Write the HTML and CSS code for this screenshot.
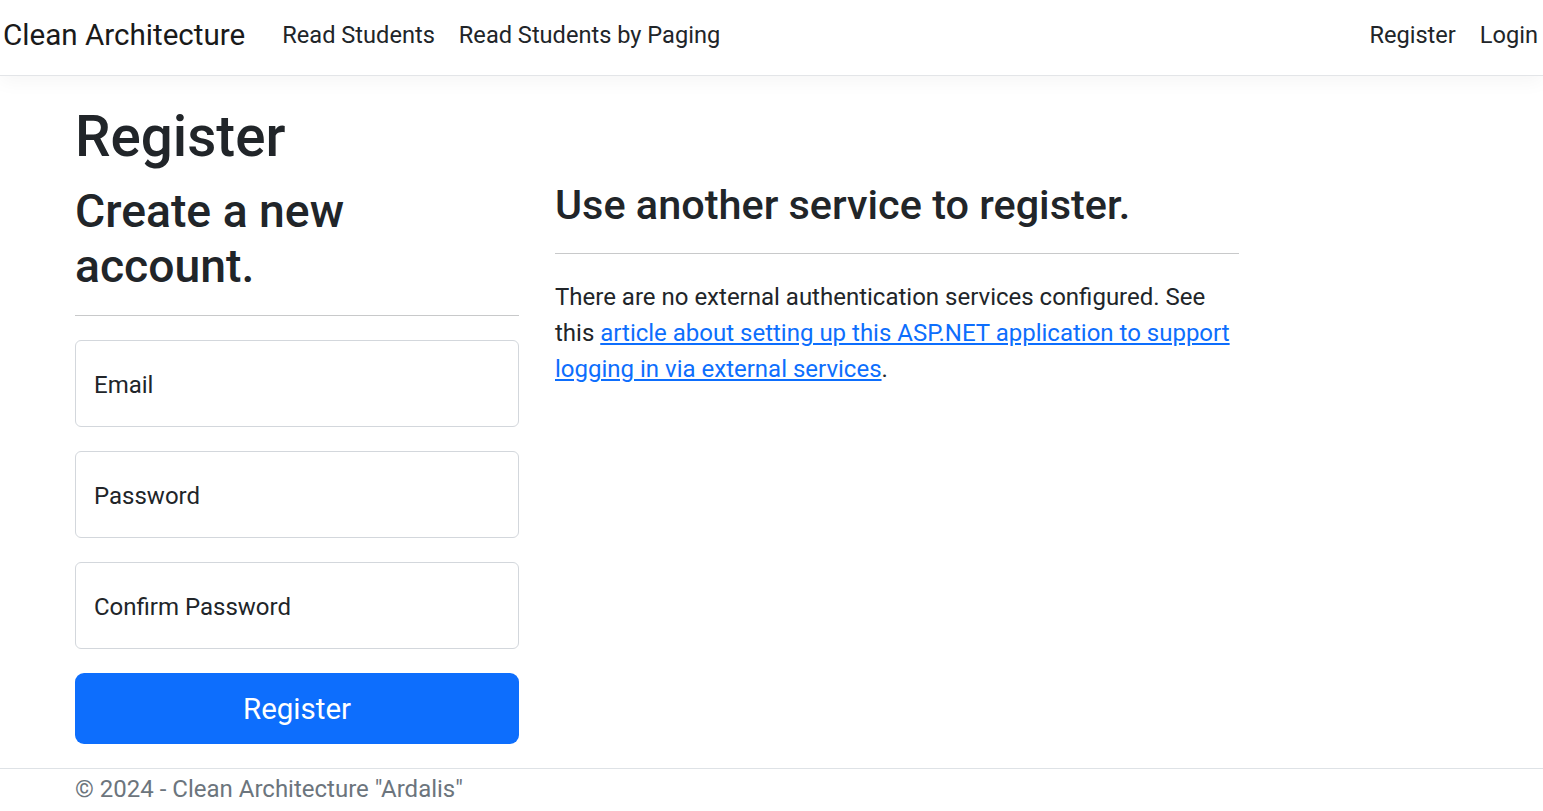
FILE: index.html
```html
<!DOCTYPE html>
<html lang="en">
<head>
<meta charset="utf-8">
<title>Register - Clean Architecture</title>
<link rel="stylesheet" href="styles.css">
</head>
<body>
<header class="navbar">
  <a class="brand" href="#">Clean Architecture</a>
  <ul class="nav nav-main">
    <li><a class="nav-link" href="#">Read Students</a></li>
    <li><a class="nav-link" href="#">Read Students by Paging</a></li>
  </ul>
  <ul class="nav nav-right">
    <li><a class="nav-link" href="#">Register</a></li>
    <li><a class="nav-link" href="#">Login</a></li>
  </ul>
</header>

<div class="container">
  <main class="main">
    <h1 class="page-title">Register</h1>
    <div class="row">
      <section class="col-form">
        <form class="register-form">
          <h2 class="form-title">Create a new account.</h2>
          <hr class="rule rule-left">
          <div class="field"><input class="form-control" type="email" placeholder="Email" aria-label="Email"></div>
          <div class="field"><input class="form-control" type="password" placeholder="Password" aria-label="Password"></div>
          <div class="field"><input class="form-control" type="password" placeholder="Confirm Password" aria-label="Confirm Password"></div>
          <button class="btn-primary" type="button">Register</button>
        </form>
      </section>
      <section class="col-external">
        <h3 class="ext-title">Use another service to register.</h3>
        <hr class="rule rule-right">
        <p class="ext-text">There are no external authentication services configured. See this <a class="link" href="#">article about setting up this ASP.NET application to support logging in via external services</a>.</p>
      </section>
    </div>
  </main>
</div>

<footer class="footer">
  <div class="footer-inner">&copy; 2024 - Clean Architecture "Ardalis"</div>
</footer>
</body>
</html>
```
FILE: styles.css
```css
html, body {
  margin: 0;
  padding: 0;
}
html { overflow: hidden; }
body {
  font-family: Roboto, "Liberation Sans", Arial, sans-serif;
  font-size: 24px;
  line-height: 1.5;
  color: #212529;
  background: #fff;
}

/* navbar */
.navbar {
  display: flex;
  align-items: flex-start;
  height: 75px;
  padding: 0 5px 0 3px;
  border-bottom: 1px solid #e3e5e8;
  box-shadow: 0 6px 18px rgba(0,0,0,.04);
}
.brand {
  font-size: 29.6px;
  line-height: 45px;
  padding-top: 13px;
  color: #1a1a1a;
  text-decoration: none;
  white-space: nowrap;
}
.nav {
  display: flex;
  gap: 24px;
  list-style: none;
  margin: 0;
  padding: 0;
}
.nav-main { margin-left: 37px; }
.nav-right { margin-left: auto; }
.nav-link {
  display: block;
  font-size: 23.6px;
  line-height: 36px;
  padding-top: 17px;
  color: #212529;
  text-decoration: none;
  white-space: nowrap;
}

/* layout */
.container {
  width: 1404px;
  margin-left: 75px;
}
.main {
  padding-top: 28px;
  padding-bottom: 24px;
}
.page-title {
  font-size: 56.5px;
  font-weight: 500;
  line-height: 1.2;
  margin: 0 0 12px;
}
.row {
  display: grid;
  grid-template-columns: 444px 684px;
  column-gap: 36px;
  align-items: start;
}
.form-title {
  font-size: 46.3px;
  font-weight: 500;
  line-height: 1.2;
  margin: 0;
}
.ext-title {
  font-size: 41.4px;
  font-weight: 500;
  line-height: 1.2;
  margin: -3px 0 0;
}
.rule {
  border: 0;
  border-top: 1px solid #c8c9ca;
  height: 0;
}
.rule-left { margin: 20px 0 24px; }
.rule-right { margin: 23px 0 25px; }

/* form */
.field { margin-bottom: 24px; }
.form-control {
  display: block;
  box-sizing: border-box;
  width: 100%;
  height: 87px;
  padding: 3px 18px 0;
  border: 1px solid #d3d7dc;
  border-radius: 6px;
  font-family: inherit;
  font-size: 24px;
  color: #212529;
  background: #fff;
  outline: none;
}
.form-control::placeholder {
  color: #212529;
  opacity: 1;
}
.btn-primary {
  display: block;
  box-sizing: border-box;
  width: 100%;
  height: 71px;
  padding: 2px 0 0;
  border: 0;
  border-radius: 9px;
  background: #0d6efd;
  color: #fff;
  font-family: inherit;
  font-size: 29.5px;
  line-height: 45px;
}

/* external */
.ext-text { margin: 0; }
.link {
  color: #0d6efd;
  text-decoration: underline;
}

/* footer */
.footer {
  border-top: 1px solid #dee2e6;
}
.footer-inner {
  margin-left: 75px;
  padding-top: 2px;
  color: #6c757d;
  line-height: 36px;
  white-space: nowrap;
}
```
